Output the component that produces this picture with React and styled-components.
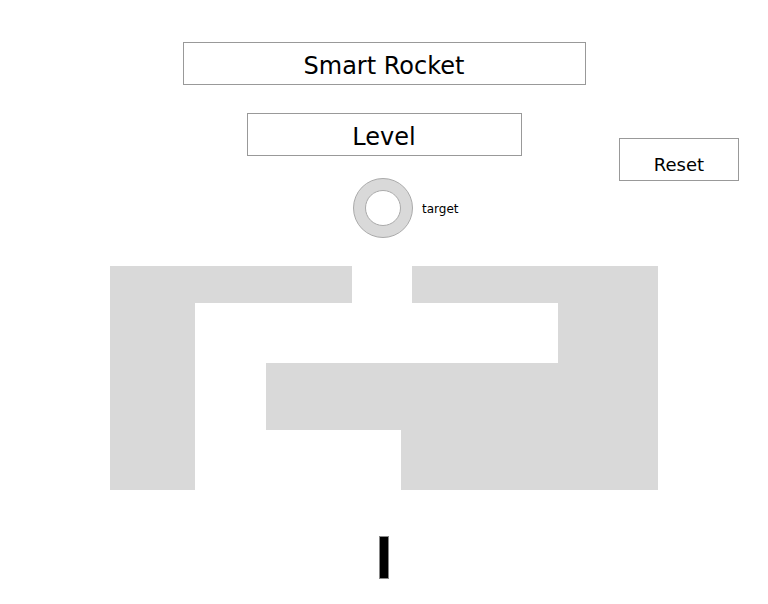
import styled, { createGlobalStyle } from "styled-components";

const GlobalStyle = createGlobalStyle`
  html, body {
    margin: 0;
    padding: 0;
    background: #ffffff;
  }
  body {
    font-family: "DejaVu Sans", Verdana, sans-serif;
    color: #000;
  }
`;

const Page = styled.div`
  width: 768px;
  height: 604px;
  position: relative;
  overflow: hidden;
`;

const TitleBox = styled.div`
  box-sizing: border-box;
  width: 403px;
  height: 43px;
  margin: 42px auto 0;
  border: 1px solid #999;
  display: flex;
  align-items: center;
  justify-content: center;
  padding-top: 5px;
  font-size: 24px;
`;

const LevelRow = styled.div`
  display: grid;
  grid-template-columns: 1fr 275px 1fr;
  margin-top: 28px;
`;

const LevelBox = styled.div`
  grid-column: 2;
  box-sizing: border-box;
  height: 43px;
  border: 1px solid #999;
  display: flex;
  align-items: center;
  justify-content: center;
  padding-top: 5px;
  font-size: 24px;
`;

const ResetButton = styled.button`
  grid-column: 3;
  justify-self: end;
  box-sizing: border-box;
  width: 120px;
  height: 43px;
  margin: 25px 29px 0 0;
  background: #fff;
  border: 1px solid #999;
  font-family: "DejaVu Sans", Verdana, sans-serif;
  font-size: 18px;
  padding: 9px 0 0;
  color: #000;
  cursor: pointer;
`;

const Field = styled.div`
  position: absolute;
  left: 0;
  top: 0;
  width: 768px;
  height: 604px;
  pointer-events: none;
`;

const Wall = styled.div`
  position: absolute;
  background: #d9d9d9;
`;

const Target = styled.div`
  position: absolute;
  left: 353px;
  top: 178px;
  width: 60px;
  height: 60px;
  box-sizing: border-box;
  border-radius: 50%;
  background: #d9d9d9;
  border: 1px solid #aaa;
  display: flex;
  align-items: center;
  justify-content: center;
`;

const TargetHole = styled.div`
  width: 36px;
  height: 36px;
  box-sizing: border-box;
  border-radius: 50%;
  background: #fff;
  border: 1px solid #aaa;
`;

const TargetLabel = styled.span`
  position: absolute;
  left: 422px;
  top: 202px;
  font-size: 12px;
`;

const Rocket = styled.div`
  position: absolute;
  left: 379px;
  top: 536px;
  width: 10px;
  height: 43px;
  box-sizing: border-box;
  background: #000;
  border: 1px solid #888;
`;

// obstacle layout of the level, in canvas pixels
const walls = [
  { x: 110, y: 266, w: 85, h: 224 },
  { x: 110, y: 266, w: 242, h: 37 },
  { x: 412, y: 266, w: 246, h: 37 },
  { x: 558, y: 266, w: 100, h: 224 },
  { x: 266, y: 363, w: 292, h: 67 },
  { x: 401, y: 430, w: 257, h: 60 },
];

export default function App() {
  return (
    <Page>
      <GlobalStyle />
      <Field>
        {walls.map((w, i) => (
          <Wall
            key={i}
            style={{ left: w.x, top: w.y, width: w.w, height: w.h }}
          />
        ))}
        <Target>
          <TargetHole />
        </Target>
        <TargetLabel>target</TargetLabel>
        <Rocket />
      </Field>
      <TitleBox>Smart Rocket</TitleBox>
      <LevelRow>
        <LevelBox>Level</LevelBox>
        <ResetButton>Reset</ResetButton>
      </LevelRow>
    </Page>
  );
}
